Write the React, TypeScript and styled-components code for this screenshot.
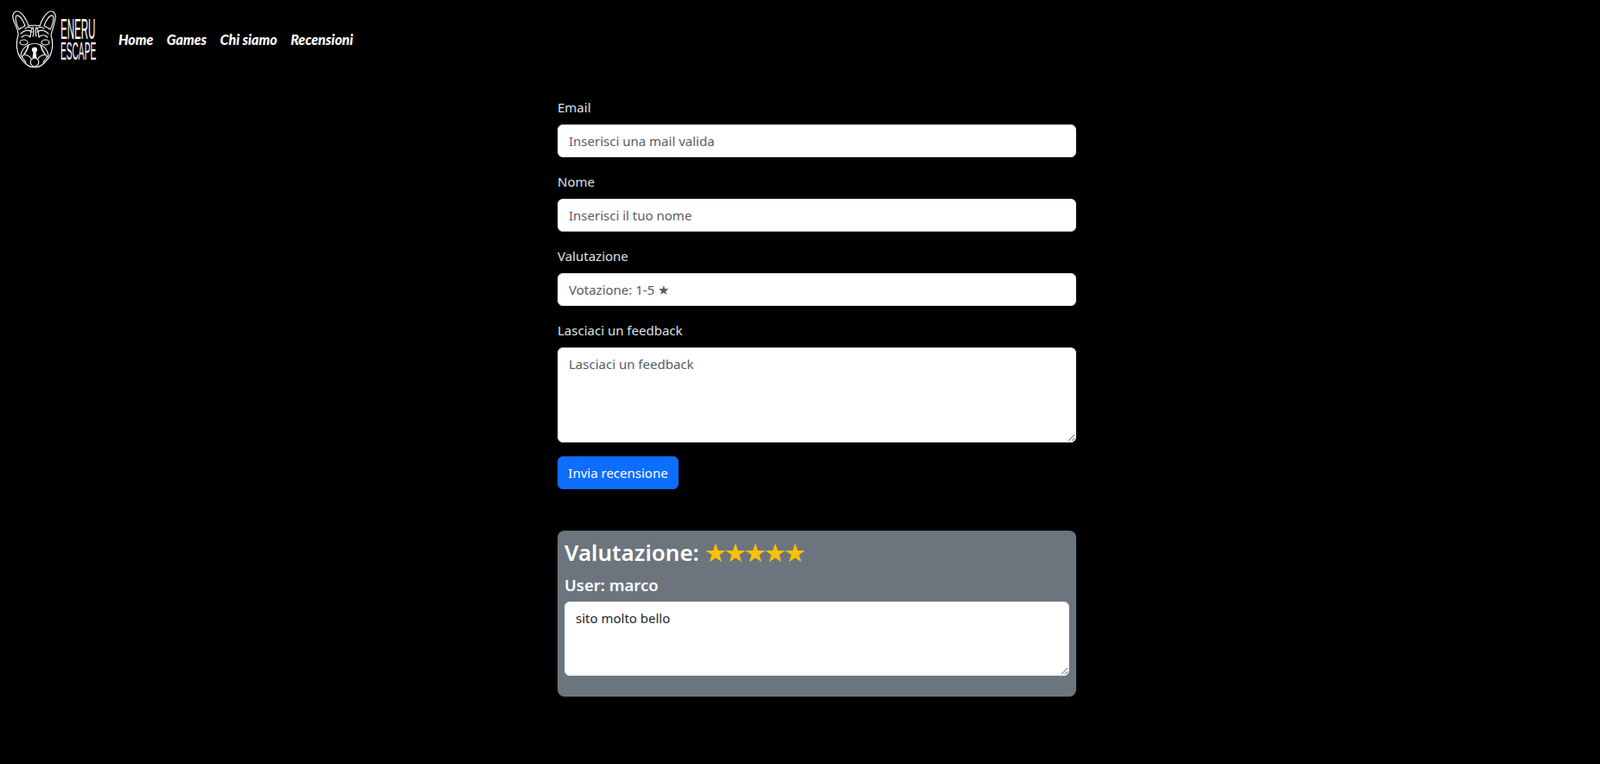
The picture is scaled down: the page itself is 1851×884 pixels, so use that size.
import React from "react";
import styled, { createGlobalStyle } from "styled-components";

const GlobalStyle = createGlobalStyle`
  html, body {
    margin: 0;
    background: #000;
    color: #dee2e6;
    font-family: "Noto Sans", "Open Sans", sans-serif;
    font-size: 16px;
    line-height: 24px;
  }
  * {
    box-sizing: border-box;
  }
`;

const Page = styled.div`
  min-height: 884px;
  background: #000;
`;

const Navbar = styled.nav`
  display: flex;
  align-items: center;
  height: 90px;
  padding: 0 12px;
`;

const Brand = styled.a`
  display: flex;
  align-items: center;
  gap: 2px;
  width: 100px;
  margin-right: 25px;
`;

const BrandWords = styled.div`
  display: flex;
  flex-direction: column;
  width: 40px;
  color: #fff;
  font-family: "Liberation Sans", sans-serif;
`;

const BrandWord = styled.span<{ $size: number; $height: number; $scale: number }>`
  display: block;
  font-size: ${({ $size }) => $size}px;
  line-height: ${({ $height }) => $height}px;
  white-space: nowrap;
  transform: scaleX(${({ $scale }) => $scale});
  transform-origin: left center;
`;

const NavLinks = styled.div`
  display: flex;
  gap: 15.5px;
  margin-top: 2px;
`;

const NavLink = styled.a`
  color: #fff;
  font-family: Lato, sans-serif;
  font-size: 16px;
  font-style: italic;
  font-weight: 900;
`;

const Content = styled.div`
  display: flex;
  justify-content: center;
  padding-left: 39px;
`;

const Main = styled.main`
  width: 600px;
  margin-top: 22px;
`;

const Field = styled.div`
  margin-bottom: 16px;
`;

const Label = styled.label`
  display: block;
  margin-bottom: 8px;
  font-size: 15px;
`;

const Input = styled.input`
  display: block;
  width: 100%;
  height: 38px;
  padding: 6px 12px;
  border: 1px solid #dee2e6;
  border-radius: 6px;
  background: #fff;
  color: #212529;
  font: inherit;
  font-size: 15px;

  &::placeholder {
    color: #595c5f;
    opacity: 1;
  }
`;

const TextArea = styled.textarea<{ $height: number }>`
  display: block;
  width: 100%;
  height: ${({ $height }) => $height}px;
  padding: 6px 12px;
  border: 1px solid #dee2e6;
  border-radius: 6px;
  background: #fff;
  color: #212529;
  font: inherit;
  font-size: 15px;

  &::placeholder {
    color: #595c5f;
    opacity: 1;
  }
`;

const SubmitButton = styled.button`
  display: block;
  height: 38px;
  width: 140px;
  padding: 0;
  border: 1px solid #0d6efd;
  border-radius: 6px;
  background: #0d6efd;
  color: #fff;
  font: inherit;
  font-size: 15px;
`;

const ReviewCard = styled.section`
  height: 192px;
  margin-top: 48px;
  padding: 9px 8px 8px;
  border-radius: 8px;
  background: #6c757d;
  color: #fff;
`;

const ReviewTitle = styled.h3`
  margin: 0 0 9px;
  font-size: 26px;
  font-weight: 600;
  line-height: 33px;
`;

const Stars = styled.span`
  color: #ffc107;
  font-size: 26px;
`;

const ReviewUser = styled.h5`
  margin: 0 0 7px;
  font-size: 18.5px;
  font-weight: 600;
  line-height: 24px;
`;

export default function App() {
  return (
    <Page>
      <GlobalStyle />
      <Navbar>
        <Brand>
          <svg width="56" height="68" viewBox="0 0 56 68" fill="none" stroke="#f2f2f2" strokeWidth="1.2" strokeLinejoin="round" strokeLinecap="round">
            <path d="M3 10C2 5 5 2 8 2c5 0 11 10 13 17 3-1 10-1 13 0C36 12 42 2 47 2c3 0 6 3 5 8-1 8-4 14-5 20 2 6 2 12 1 17-1 7-5 11-9 15-4 4-8 5-11 5s-7-1-11-5c-4-4-8-8-9-15-1-5-1-11 1-17C10 24 5 18 3 10z" />
            <path d="M7 7c-2 3 0 11 3 16 2-2 5-3 7-4C15 13 11 6 7 7zM49 7c2 3 0 11-3 16-2-2-5-3-7-4 2-6 6-13 10-12z" />
            <path d="M17 22c3-2 6-2 8 0-2 3-1 6-2 9M39 22c-3-2-6-2-8 0 2 3 1 6 2 9M12 28c4-4 9-5 13-2M44 28c-4-4-9-5-13-2M13 32c3-3 7-3 10 0M43 32c-3-3-7-3-10 0M26 20c1 4 1 8 0 11M30 20c-1 4-1 8 0 11" />
            <ellipse cx="15.500" cy="38" rx="4.500" ry="3" />
            <ellipse cx="40.500" cy="38" rx="4.500" ry="3" />
            <path d="M21 41c-5 2-8 7-9 12l6 8M35 41c5 2 8 7 9 12l-6 8M21 41c-1 5-3 9-7 13M35 41c1 5 3 9 7 13" />
            <path d="M21 41c4-2 10-2 14 0 1 4 3 8 5 11-4 1-7 2-8 5M21 41c-1 4-3 8-5 11 4 1 7 2 8 5" />
            <circle cx="28" cy="61" r="4.800" />
            <path d="M28 43.500c2 0 3.200 1.400 3.200 3 0 1.400-.9 2.300-1.600 3l.9 6.500h-5l.9-6.500c-.7-.7-1.600-1.600-1.600-3 0-1.600 1.200-3 3.200-3z" fill="#f2f2f2" stroke="none" />
          </svg>
          <BrandWords>
            <BrandWord $size={33} $height={27} $scale={0.35}>ENERU</BrandWord>
            <BrandWord $size={29} $height={24} $scale={0.35}>ESCAPE</BrandWord>
          </BrandWords>
        </Brand>
        <NavLinks>
          <NavLink>Home</NavLink>
          <NavLink>Games</NavLink>
          <NavLink>Chi siamo</NavLink>
          <NavLink>Recensioni</NavLink>
        </NavLinks>
      </Navbar>
      <Content>
        <Main>
          <form>
            <Field>
              <Label>Email</Label>
              <Input placeholder="Inserisci una mail valida" />
            </Field>
            <Field>
              <Label>Nome</Label>
              <Input placeholder="Inserisci il tuo nome" />
            </Field>
            <Field>
              <Label>Valutazione</Label>
              <Input placeholder="Votazione: 1-5 ★" />
            </Field>
            <Field>
              <Label>Lasciaci un feedback</Label>
              <TextArea $height={110} placeholder="Lasciaci un feedback" />
            </Field>
            <SubmitButton type="button">Invia recensione</SubmitButton>
          </form>
          <ReviewCard>
            <ReviewTitle>
              Valutazione: <Stars>★★★★★</Stars>
            </ReviewTitle>
            <ReviewUser>User: marco</ReviewUser>
            <TextArea $height={86} defaultValue="sito molto bello" />
          </ReviewCard>
        </Main>
      </Content>
    </Page>
  );
}
